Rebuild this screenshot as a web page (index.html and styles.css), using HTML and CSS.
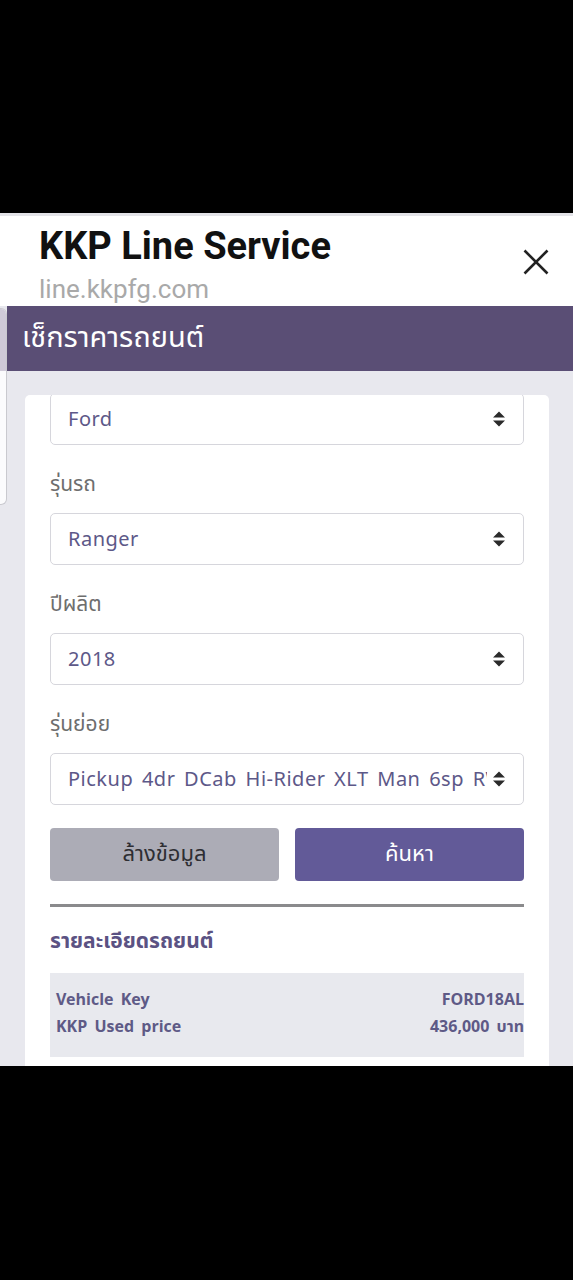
FILE: index.html
```html
<!DOCTYPE html>
<html lang="th">
<head>
<meta charset="utf-8">
<title>KKP Line Service</title>
<link rel="stylesheet" href="styles.css">
</head>
<body>
<div class="topspace"></div>
<div class="app">
  <header class="header">
    <div class="header-text">
      <div class="title">KKP Line Service</div>
      <div class="url">line.kkpfg.com</div>
    </div>
    <svg class="close" width="26" height="26" viewBox="0 0 26 26"><path d="M1.5 1.5 L24.5 24.5 M24.5 1.5 L1.5 24.5" stroke="#222" stroke-width="2.6" fill="none"/></svg>
  </header>
  <div class="bar">เช็กราคารถยนต์</div>
  <div class="side-tab"><div class="side-tab-top"></div></div>
  <main class="content">
    <div class="card">
      <div class="select first"><span class="value">Ford</span><svg class="arrows" width="12" height="16" viewBox="0 0 12 16"><path d="M6 0.5 L12 6.5 H0 Z M0 9.5 H12 L6 15.5 Z" fill="#2b2b2b"/></svg></div>

      <div class="label">รุ่นรถ</div>
      <div class="select"><span class="value">Ranger</span><svg class="arrows" width="12" height="16" viewBox="0 0 12 16"><path d="M6 0.5 L12 6.5 H0 Z M0 9.5 H12 L6 15.5 Z" fill="#2b2b2b"/></svg></div>

      <div class="label">ปีผลิต</div>
      <div class="select"><span class="value">2018</span><svg class="arrows" width="12" height="16" viewBox="0 0 12 16"><path d="M6 0.5 L12 6.5 H0 Z M0 9.5 H12 L6 15.5 Z" fill="#2b2b2b"/></svg></div>

      <div class="label">รุ่นย่อย</div>
      <div class="select"><span class="value">Pickup 4dr DCab Hi-Rider XLT Man 6sp RWD 2.2DT</span><svg class="arrows" width="12" height="16" viewBox="0 0 12 16"><path d="M6 0.5 L12 6.5 H0 Z M0 9.5 H12 L6 15.5 Z" fill="#2b2b2b"/></svg></div>

      <div class="buttons">
        <button class="btn btn-clear">ล้างข้อมูล</button>
        <button class="btn btn-search">ค้นหา</button>
      </div>

      <hr class="divider">

      <h2 class="detail-title">รายละเอียดรถยนต์</h2>
      <div class="detail-box">
        <div class="row"><span>Vehicle Key</span><span>FORD18AL</span></div>
        <div class="row"><span>KKP Used price</span><span>436,000 บาท</span></div>
      </div>
    </div>
  </main>
</div>
</body>
</html>
```

FILE: styles.css
```css
* { box-sizing: border-box; }
html, body { margin: 0; padding: 0; }
body {
  background: #000;
  font-family: "Noto Sans Thai", "Noto Sans", "Liberation Sans", sans-serif;
  height: 1280px;
  overflow: hidden;
}
.topspace { height: 213px; }
.app {
  position: relative;
  height: 853px;
  overflow: hidden;
  background: #e8e8ee;
  border-top: 3px solid #e3e3e8;
}
.header {
  background: #fff;
  height: 90px;
  display: flex;
  align-items: flex-start;
  justify-content: space-between;
  padding: 8px 24px 0 39px;
}
.title {
  font-family: Roboto, "Liberation Sans", sans-serif;
  font-weight: 700;
  font-size: 38px;
  line-height: 44px;
  color: #111;
}
.url {
  font-family: Roboto, "Liberation Sans", sans-serif;
  font-size: 26px;
  line-height: 30px;
  margin-top: 6px;
  color: #a9a9a9;
}
.close { margin-top: 25px; }
.bar {
  height: 65px;
  margin-left: 7px;
  background: #5a4e75;
  color: #fff;
  font-size: 29px;
  line-height: 65px;
  padding-left: 15px;
}
.side-tab {
  position: absolute;
  left: 0;
  top: 92px;
  width: 7px;
  height: 197px;
  background: #fbfbfd;
  border: 1px solid #c9c9cf;
  border-left: none;
  border-radius: 0 6px 6px 0;
  overflow: hidden;
}
.side-tab-top { height: 62px; background: #cfcad8; }
.content { padding: 24px 24px 0 25px; }
.card {
  background: #fff;
  border-radius: 5px;
  padding: 0 25px 20px;
  height: 720px;
  overflow: hidden;
}
.select {
  height: 52px;
  border: 1px solid #d6d6dc;
  border-radius: 5px;
  display: flex;
  align-items: center;
  padding: 2px 18px 0 17px;
  gap: 6px;
}
.select.first { margin-top: -2px; }
.select .value {
  flex: 1;
  min-width: 0;
  overflow: hidden;
  white-space: nowrap;
  font-size: 20px;
  color: #5d5888;
  letter-spacing: 0.5px;
  word-spacing: 3px;
}
.arrows { flex: none; margin-top: -2px; }
.label {
  margin-top: 26px;
  margin-bottom: 14px;
  height: 28px;
  line-height: 28px;
  font-size: 21px;
  color: #6e6e6e;
}
.buttons {
  display: grid;
  grid-template-columns: 1fr 1fr;
  gap: 16px;
  margin-top: 23px;
}
.btn {
  height: 53px;
  border: none;
  border-radius: 4px;
  font-family: inherit;
  font-size: 22px;
}
.btn-clear { background: #acacb6; color: #2e2e33; }
.btn-search { background: #625a98; color: #fff; }
.divider {
  margin: 23px 0 0;
  border: none;
  height: 3px;
  background: #8a8a8c;
}
.detail-title {
  margin: 20px 0 0;
  font-size: 21px;
  line-height: 30px;
  font-weight: 700;
  color: #5b5283;
}
.detail-box {
  margin-top: 16px;
  background: #e8e9ee;
  padding: 14px 0 16px 6px;
}
.row {
  display: flex;
  justify-content: space-between;
  font-size: 16px;
  line-height: 27px;
  font-weight: 700;
  color: #5e5a86;
  word-spacing: 3px;
}
```
